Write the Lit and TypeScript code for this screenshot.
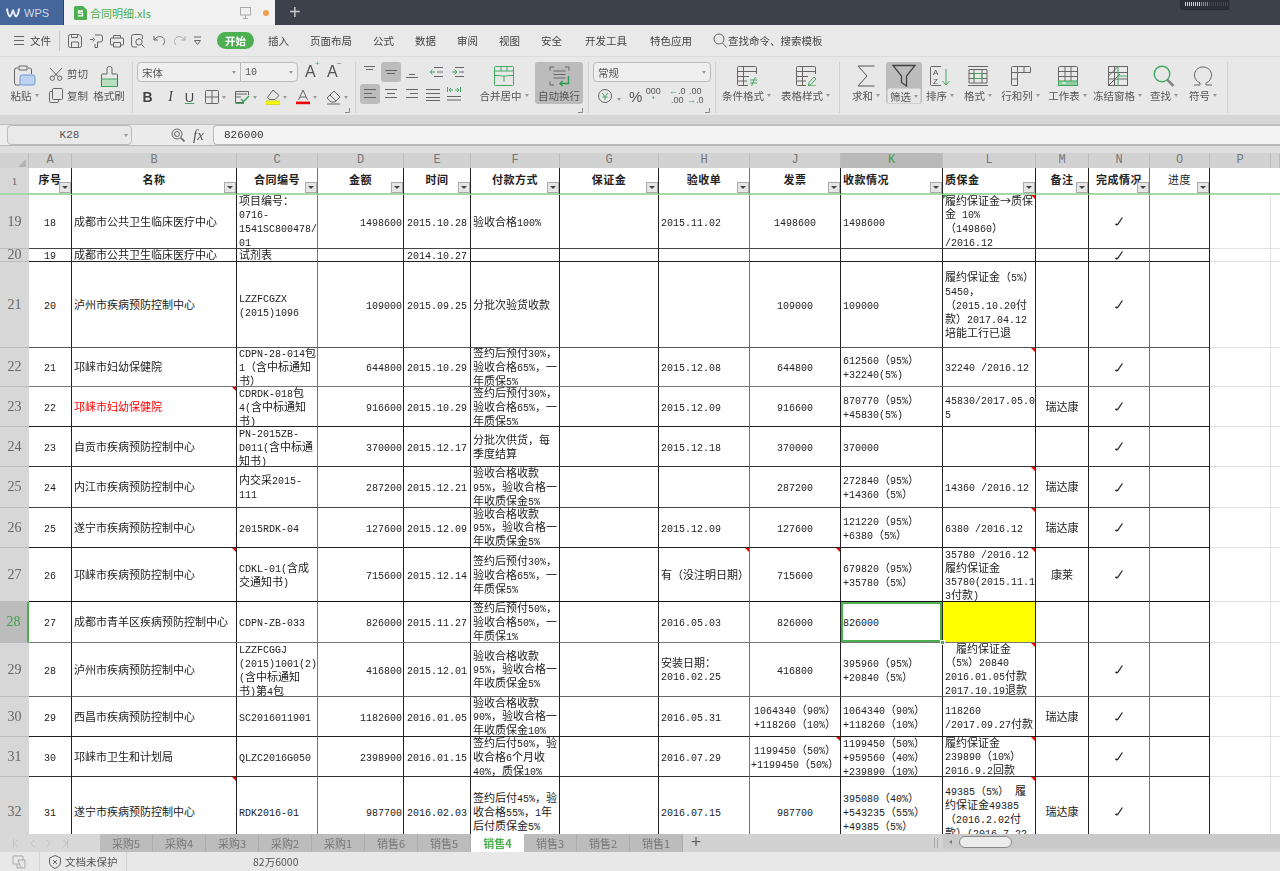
import { LitElement, html, css } from "lit";
import { customElement } from "lit/decorators.js";

const mix = (t: string) =>
  t.split(/([\x20-\x7e]+)/).map((p, i) => (i % 2 ? html`<span class="l">${p}</span>` : p));

const caret = html`<i class="caret"></i>`;
const launcher = html`<svg class="launch" width="5" height="5" viewBox="0 0 5 5"><path d="M4.5 0V4.5H0"/></svg>`;

const I = {
  logo: html`<svg width="14" height="11" viewBox="0 0 14 11" class="logo"><path d="M1 1.5C1.5 6 3 9 4 9.5C5 9.5 6.5 4 7 3.5C7.5 4 9 9.5 10 9.5C11 9 12.5 6 13 1.5"/></svg>`,
  sheet: html`<svg width="13" height="14" viewBox="0 0 13 14" class="solid"><path d="M1.5 0H9L13 4V12.5A1.5 1.5 0 0 1 11.5 14H1.5A1.5 1.5 0 0 1 0 12.5V1.5A1.5 1.5 0 0 1 1.5 0Z" fill="#4caf50" stroke="none"/><path d="M9 5H4.5V7.2H8.5V9.8H4" stroke="#fff" stroke-width="1.3"/></svg>`,
  monitor: html`<svg width="11" height="12" viewBox="0 0 11 12" class="lite"><rect x=".5" y=".5" width="10" height="7.5"/><path d="M5.5 8V11M3 11.5H8"/></svg>`,
  save: html`<svg width="14" height="14" viewBox="0 0 14 14"><path d="M2.5.5H11L13.5 3V11.5A2 2 0 0 1 11.5 13.5H2.5A2 2 0 0 1 .5 11.5V2.5A2 2 0 0 1 2.5.5ZM3.5 13V8H10.5V13M3.5 .7V3.5H9.5V.7"/></svg>`,
  saveas: html`<svg width="14" height="14" viewBox="0 0 14 14"><path d="M1 5.5H4M4 3.5L5.5 5.5L4 7.5M6 1H11.5A2 2 0 0 1 13.5 3V6A2 2 0 0 1 11.5 8H8.5V13.5H6V10"/></svg>`,
  print: html`<svg width="14" height="14" viewBox="0 0 14 14"><path d="M3.5 4V1.5H10.5V4M3 11H1.5A1 1 0 0 1 .5 10V5A1 1 0 0 1 1.5 4H12.5A1 1 0 0 1 13.5 5V10A1 1 0 0 1 12.5 11H11M3.5 8.5H10.5V13H3.5Z"/></svg>`,
  preview: html`<svg width="15" height="14" viewBox="0 0 15 14"><path d="M6 13H2.5A2 2 0 0 1 .5 11V2.5A2 2 0 0 1 2.5.5H9.5A2 2 0 0 1 11.5 2.5V5"/><circle cx="8" cy="8" r="3.2"/><path d="M10.5 10.5L13.5 13.5"/></svg>`,
  undo: html`<svg width="13" height="11" viewBox="0 0 13 11"><path d="M1 1V5H5M1.3 5C3 2 6 1 9 2C12 3.5 12.5 7 10 10"/></svg>`,
  redo: html`<svg width="13" height="11" viewBox="0 0 13 11" class="lite"><path d="M12 1V5H8M11.7 5C10 2 7 1 4 2C1 3.5 .5 7 3 10"/></svg>`,
  more: html`<svg width="9" height="10" viewBox="0 0 9 10"><path d="M1 1H8M1.5 4.5H7.5L4.5 8.5Z"/></svg>`,
  search: html`<svg width="14" height="15" viewBox="0 0 14 15"><circle cx="6" cy="6" r="5"/><path d="M9.5 10L13.5 14.5"/></svg>`,
  paste: html`<svg width="22" height="22" viewBox="0 0 22 22"><path d="M4 3H2.5A2 2 0 0 0 .5 5V18A2 2 0 0 0 2.5 20H6M14 3H15.5A2 2 0 0 1 17.5 5V9M5 1H13V5H5Z"/><rect x="6" y="10" width="15" height="10" rx="2" fill="#bcd2ee" stroke="#6d9ad6"/></svg>`,
  cut: html`<svg width="14" height="14" viewBox="0 0 14 14"><path d="M1 1L9 9.5M13 1L5 9.5"/><circle cx="3.2" cy="11.2" r="2.2"/><circle cx="10.8" cy="11.2" r="2.2"/></svg>`,
  copy: html`<svg width="14" height="15" viewBox="0 0 14 15"><path d="M3 3.5H1.5A1 1 0 0 0 .5 4.5V13.5A1 1 0 0 0 1.5 14.5H8.5A1 1 0 0 0 9.5 13.5V12M4.5.5H12.5A1 1 0 0 1 13.5 1.5V10.5A1 1 0 0 1 12.5 11.5H4.5A1 1 0 0 1 3.5 10.5V1.5A1 1 0 0 1 4.5.5Z"/></svg>`,
  brush: html`<svg width="19" height="21" viewBox="0 0 19 21"><rect x="1.5" y="13" width="16" height="7" fill="#b7dfc0" stroke="none"/><path d="M7 8V2.5A2.5 2 0 0 1 12 2.5V8H16.5A1 1 0 0 1 17.5 9V20.5H1.5V9A1 1 0 0 1 2.5 8Z"/><path d="M1.5 13H17.5M1.5 20.5H17.5" class="gs"/></svg>`,
  border: html`<svg width="14" height="14" viewBox="0 0 14 14"><path d="M1.5.5H12.5A1 1 0 0 1 13.5 1.5V12.5A1 1 0 0 1 12.5 13.5H1.5A1 1 0 0 1 .5 12.5V1.5A1 1 0 0 1 1.5.5ZM7 .5V13.5M.5 7H13.5"/></svg>`,
  cfmt: html`<svg width="15" height="14" viewBox="0 0 15 14"><path d="M13.5 5V1.5H.5V12.5H9M.5 7H6M.5 4H12"/><path d="M6 9L8.5 11.5L14 6" class="gs" stroke-width="1.6"/><path d="M.5 13.5H9" class="gs"/></svg>`,
  fill: html`<svg width="14" height="16" viewBox="0 0 14 16"><path d="M7 1L13 6.5L9 10.5H3L1.5 8.5Z"/><rect x="0" y="12" width="14" height="3.4" fill="#ff0" stroke="#d8d820"/></svg>`,
  font: html`<svg width="14" height="16" viewBox="0 0 14 16"><path d="M2.5 11L7 1L11.5 11M4 8H10"/><rect x="0" y="12.6" width="14" height="2.6" fill="#e00" stroke="none"/></svg>`,
  eraser: html`<svg width="15" height="15" viewBox="0 0 15 15"><path d="M8 1L14 7L9 12H5L1 8ZM4 5L10 11M1 14H14" /></svg>`,
  lines: (ys: number[][]) => html`<svg width="14" height="14" viewBox="0 0 14 14"><path d="${ys.map(([a, b, y]) => `M${a} ${y}H${b}`).join("")}"/></svg>`,
  indL: html`<svg width="13" height="12" viewBox="0 0 13 12"><path d="M4 1.5H13M7 6H13M4 10.5H13"/><path d="M5 6H0M2.5 3.5L0 6L2.5 8.5" class="gs"/></svg>`,
  indR: html`<svg width="13" height="12" viewBox="0 0 13 12"><path d="M4 1.5H13M8 6H13M4 10.5H13"/><path d="M1 6H6M3.5 3.5L6 6L3.5 8.5" class="gs"/></svg>`,
  dist: html`<svg width="14" height="14" viewBox="0 0 14 14"><path d="M0 9.5H14M0 13H14"/><path d="M.5 0V5M13.5 0V5M2.5 3H6M4 1L2 3L4 5M11.5 3H8M10 1L12 3L10 5" class="gs"/></svg>`,
  merge: html`<svg width="20" height="20" viewBox="0 0 20 20"><path d="M1.5.5H18.5A1 1 0 0 1 19.5 1.5V18.5A1 1 0 0 1 18.5 19.5H1.5A1 1 0 0 1 .5 18.5V1.5A1 1 0 0 1 1.5.5ZM.5 5H19.5M.5 9.5H6.5M13.5 9.5H19.5M7 .5V5M13 .5V5M6.5 10H13.5M10 10V15.5" class="gs"/></svg>`,
  wrap: html`<svg width="21" height="20" viewBox="0 0 21 20"><path d="M1 4.5V1H5M16 1H20V4.5M1 15.5V19H5M4.5 5H16.5M4.5 8.5H16.5M4.5 12H16.5"/><path d="M19.5 10V17.5H11M13.5 15L11 17.5L13.5 20" class="gd"/></svg>`,
  yen: html`<svg width="14" height="14" viewBox="0 0 14 14"><circle cx="7" cy="7" r="6.5"/><path d="M4 4L7 7.5L10 4M7 7.5V11M4.5 8H9.5" class="gs"/></svg>`,
  cond: html`<svg width="20" height="20" viewBox="0 0 20 20"><path d="M19.5 8V1.5A1 1 0 0 0 18.5 .5H1.5A1 1 0 0 0 .5 1.5V18.5A1 1 0 0 0 1.5 19.5H11M.5 5.5H19.5M.5 10.5H12M.5 15H10M6.5 .5V19.5"/><path d="M13 14H20M13 17H20M18.5 11L14.5 20" class="gs"/></svg>`,
  tstyle: html`<svg width="20" height="20" viewBox="0 0 20 20"><path d="M19.5 8V1.5A1 1 0 0 0 18.5 .5H1.5A1 1 0 0 0 .5 1.5V18.5A1 1 0 0 0 1.5 19.5H10M.5 5.5H19.5M.5 10.5H12M.5 15H10M6.5 .5V19.5"/><path d="M12.5 19.5L13 16.5L18 11L20 13L15 18.5ZM12 19.8H20" class="gs"/></svg>`,
  sum: html`<svg width="20" height="22" viewBox="0 0 20 22"><path d="M18.5 1H2L11 11L2 21H18.5" stroke="#555"/></svg>`,
  funnel: html`<svg width="24" height="24" viewBox="0 0 24 24"><path d="M1 1.5H23L14.5 12V22L9.5 18.5V12Z" stroke="#444" stroke-width="1.3"/></svg>`,
  az: html`<svg width="20" height="20" viewBox="0 0 20 20"><path d="M11 .5H1.5A1 1 0 0 0 .5 1.5V18.5A1 1 0 0 0 1.5 19.5H11"/><path d="M16 3V18.5M12.5 15L16 19L19.5 15" class="gs"/><text x="3" y="9" class="az">A</text><text x="3" y="18" class="az">Z</text></svg>`,
  format: html`<svg width="20" height="20" viewBox="0 0 20 20"><path d="M0 .5H20M0 19.5H20M1 3.5H19V17H1ZM1 7.5H19M1 12.5H19M6 3.5V17M14 3.5V17"/><rect x="6" y="7.5" width="8" height="5" class="gs"/></svg>`,
  rowcol: html`<svg width="20" height="20" viewBox="0 0 20 20"><path d="M.5 1.5A1 1 0 0 1 1.5 .5H18.5A1 1 0 0 1 19.5 1.5V6.5H6.5V19.5H1.5A1 1 0 0 1 .5 18.5ZM6.5 .5V6.5M13 .5V6.5M.5 6.5H6.5M.5 13H6.5"/></svg>`,
  ws: html`<svg width="20" height="20" viewBox="0 0 20 20"><path d="M.5 15V1.5A1 1 0 0 1 1.5 .5H18.5A1 1 0 0 1 19.5 1.5V15M.5 5.5H19.5M.5 10.5H19.5M7 .5V15M13 .5V15"/><rect x=".5" y="15" width="19" height="4.5" fill="#8ed0a0" stroke="#3fa45c"/><path d="M4 17H8" stroke="#fff"/></svg>`,
  freeze: html`<svg width="20" height="20" viewBox="0 0 20 20"><rect x=".5" y=".5" width="19" height="19"/><path d="M.5 6.5H19.5M.5 13H19.5M6.5 .5V19.5M.5 10L10 .5M.5 19.5L12 8"/><path d="M10 .5V19.5M10 10H19.5" class="gs"/></svg>`,
  find: html`<svg width="22" height="22" viewBox="0 0 22 22"><circle cx="9" cy="9" r="7.8" class="gs" stroke-width="1.4"/><path d="M14.5 15L20.5 21" stroke-width="2.6" stroke="#888"/></svg>`,
  omega: html`<svg width="20" height="20" viewBox="0 0 20 20"><path d="M1 19H7V17C3.5 15.5 1.5 12.5 1.5 9C1.5 4.5 5 1 10 1C15 1 18.5 4.5 18.5 9C18.5 12.5 16.5 15.5 13 17V19H19"/></svg>`,
  shield: html`<svg width="12" height="14" viewBox="0 0 12 14"><path d="M6 .5L11.5 3V7C11.5 10 9 12.5 6 13.5C3 12.5 .5 10 .5 7V3ZM4 5L8 9M8 5L4 9"/></svg>`,
  devices: html`<svg width="14" height="14" viewBox="0 0 14 14" class="lite"><path d="M8 9H1V1H11V5M5 9V13H9M6 5H13V13H9Z"/></svg>`,
  zoomfx: html`<svg width="14" height="14" viewBox="0 0 14 14"><circle cx="6" cy="6" r="5"/><circle cx="6" cy="6" r="2.5"/><path d="M9.5 9.5L13.5 13.5" stroke-width="1.6"/></svg>`,
};
const check = html`<svg class="check" width="8" height="9" viewBox="0 0 8 9"><path d="M2.4 7.8L7.4 .5"/><path d="M.5 6.8L2.4 8.2" stroke-width="1.6"/></svg>`;

interface Row { n: string; h: number; line: string; c: string[]; mark?: Record<number, string>; done?: boolean; }

const pay1 = "验收合格收款\n95%，验收合格一\n年收质保金5%";
const CDC = "疾病预防控制中心";
const rows: Row[] = [
  { n: "19", h: 54, line: "#444", done: true, mark: { 11: "rt gt" }, c: ["18", "成都市公共卫生临床医疗中心", "项目编号：\n0716-\n1541SC800478/\n01", "1498600", "2015.10.28", "验收合格100%", "", "2015.11.02", "1498600", "1498600", "履约保证金→质保\n金 10%\n（149860）\n/2016.12", ""] },
  { n: "20", h: 13, line: "#222", done: true, c: ["19", "成都市公共卫生临床医疗中心", "试剂表", "", "2014.10.27", "", "", "", "", "", "", ""] },
  { n: "21", h: 86, line: "#555", done: true, c: ["20", "泸州市" + CDC, "LZZFCGZX\n(2015)1096", "109000", "2015.09.25", "分批次验货收款", "", "", "109000", "109000", "履约保证金（5%）\n5450，\n（2015.10.20付\n款）2017.04.12\n培能工行已退", ""] },
  { n: "22", h: 39, line: "#777", done: true, mark: { 11: "rt" }, c: ["21", "邛崃市妇幼保健院", "CDPN-28-014包\n1（含中标通知\n书）", "644800", "2015.10.29", "签约后预付30%，\n验收合格65%，一\n年质保5%", "", "2015.12.08", "644800", "612560（95%）\n+32240(5%)", "32240 /2016.12", ""] },
  { n: "23", h: 40, line: "#222", done: true, mark: { 2: "rt" }, c: ["22", "邛崃市妇幼保健院", "CDRDK-018包\n4(含中标通知\n书)", "916600", "2015.10.29", "签约后预付30%，\n验收合格65%，一\n年质保5%", "", "2015.12.09", "916600", "870770（95%）\n+45830(5%)", "45830/2017.05.0\n5", "瑞达康"] },
  { n: "24", h: 40, line: "#333", done: true, c: ["23", "自贡市" + CDC, "PN-2015ZB-\nD011(含中标通\n知书)", "370000", "2015.12.17", "分批次供货，每\n季度结算", "", "2015.12.18", "370000", "370000", "", ""] },
  { n: "25", h: 41, line: "#444", done: true, mark: { 11: "rt" }, c: ["24", "内江市" + CDC, "内交采2015-\n111", "287200", "2015.12.21", pay1, "", "", "287200", "272840（95%）\n+14360（5%）", "14360 /2016.12", "瑞达康"] },
  { n: "26", h: 40, line: "#222", done: true, mark: { 11: "rt" }, c: ["25", "遂宁市" + CDC, "2015RDK-04", "127600", "2015.12.09", pay1, "", "2015.12.09", "127600", "121220（95%）\n+6380（5%）", "6380 /2016.12", "瑞达康"] },
  { n: "27", h: 54, line: "#111", done: true, mark: { 2: "rt", 8: "rt", 9: "rt", 11: "rt" }, c: ["26", "邛崃市" + CDC, "CDKL-01(含成\n交通知书)", "715600", "2015.12.14", "签约后预付30%，\n验收合格65%，一\n年质保5%", "", "有（没注明日期）", "715600", "679820（95%）\n+35780（5%）", "35780 /2016.12\n履约保证金\n35780(2015.11.1\n3付款)", "康莱"] },
  { n: "28", h: 41, line: "#777", c: ["27", "成都市青羊区" + CDC, "CDPN-ZB-033", "826000", "2015.11.27", "签约后预付50%，\n验收合格50%，一\n年质保1%", "", "2016.05.03", "826000", "826000", "", ""] },
  { n: "29", h: 54, line: "#666", done: true, mark: { 11: "rt" }, c: ["28", "泸州市" + CDC, "LZZFCGGJ\n(2015)1001(2)\n(含中标通知\n书)第4包", "416800", "2015.12.01", pay1, "", "安装日期：\n2016.02.25", "416800", "395960（95%）\n+20840（5%）", "　履约保证金\n（5%）20840\n2016.01.05付款\n2017.10.19退款", ""] },
  { n: "30", h: 40, line: "#222", done: true, c: ["29", "西昌市" + CDC, "SC2016011901", "1182600", "2016.01.05", "验收合格收款\n90%，验收合格一\n年收质保金10%", "", "2016.05.31", "1064340（90%）\n+118260（10%）", "1064340（90%）\n+118260（10%）", "118260\n/2017.09.27付款", "瑞达康"] },
  { n: "31", h: 40, line: "#333", done: true, mark: { 9: "rt", 11: "rt" }, c: ["30", "邛崃市卫生和计划局", "QLZC2016G050", "2398900", "2016.01.15", "签约后付50%，验\n收合格6个月收\n40%，质保10%", "", "2016.07.29", "1199450（50%）\n+1199450（50%）", "1199450（50%）\n+959560（40%）\n+239890（10%）", "履约保证金\n239890（10%）\n2016.9.2回款", ""] },
  { n: "32", h: 70, line: "#222", done: true, mark: { 2: "rt", 11: "rt" }, c: ["31", "遂宁市" + CDC, "RDK2016-01", "987700", "2016.02.03", "签约后付45%，验\n收合格55%，1年\n后付质保金5%", "", "2016.07.15", "987700", "395080（40%）\n+543235（55%）\n+49385（5%）", "49385（5%） 履\n约保证金49385\n（2016.2.02付\n款）(2016.7.22", "瑞达康"] },
];

const align = ["ctr", "", "", "right", "ctr", "", "", "", "ctr", "", "", "ctr"];
const letters = ["A", "B", "C", "D", "E", "F", "G", "H", "J", "K", "L", "M", "N", "O", "P", ""];
const heads: [string, string][] = [
  ["序号", "ctr"], ["名称", "ctr"], ["合同编号", "ctr"], ["金额", "ctr"], ["时间", "ctr"], ["付款方式", "ctr"], ["保证金", "ctr"], ["验收单", "ctr"], ["发票", "ctr"], ["收款情况", ""], ["质保金", ""], ["备注", "ctr"], ["完成情况", "ctr"], ["进度", "ctr thin"],
];
const menus = ["插入", "页面布局", "公式", "数据", "审阅", "视图", "安全", "开发工具", "特色应用"];
const sheets = ["采购5", "采购4", "采购3", "采购2", "采购1", "销售6", "销售5", "销售4", "销售3", "销售2", "销售1"];
const bigs: [string, unknown, number, string?][] = [
  ["求和", I.sum, 40],
  ["筛选", I.funnel, 36, "on"],
  ["排序", I.az, 36],
  ["格式", I.format, 40],
  ["行和列", I.rowcol, 45],
  ["工作表", I.ws, 49],
  ["冻结窗格", I.freeze, 51],
  ["查找", I.find, 42],
  ["符号", I.omega, 36],
];

@customElement("app-root")
export class AppRoot extends LitElement {
  static styles = css`
    :host { display: block; width: 1280px; height: 871px; overflow: hidden; font-family: "Noto Sans CJK SC", "Liberation Sans", sans-serif; font-size: 10.5px; color: #444; }
    .app { display: flex; flex-direction: column; height: 871px; background: #e8e8e8; filter: blur(0.4px); }
    svg { fill: none; stroke: #666; stroke-width: 1; flex: none; display: block; }
    svg .gs { stroke: #43a860; }
    svg .gd { stroke: #2f9a4e; stroke-width: 1.4; }
    svg.lite { stroke: #aaa; }
    svg.logo { stroke: #e8eef6; stroke-width: 2; }
    svg .az { font: 8px "Liberation Sans", sans-serif; fill: #555; stroke: none; }

    .title { height: 25px; background: #3d414c; display: flex; align-items: stretch; flex: none; }
    .wps { width: 63px; background: #44669b; color: #cfd9e8; display: flex; align-items: center; gap: 4px; padding-left: 6px; box-sizing: border-box; font: 11px "Liberation Sans", sans-serif; margin-right: 1px; }
    .doc { width: 211px; background: #f1f1f1; display: flex; align-items: center; padding-left: 10px; box-sizing: border-box; color: #4caf50; font-size: 11px; }
    .doc .name { margin-left: 3px; width: 150px; }
    .dot { width: 6px; height: 6px; border-radius: 50%; background: #f0a050; margin-left: 12px; }
    .plus { color: #c8c8c8; font: 20px "Liberation Sans", sans-serif; margin-left: 14px; line-height: 24px; }
    .tray { margin-left: auto; margin-right: 51px; width: 49px; height: 9px; background: #2b2e36; border-radius: 0 0 3px 3px; box-shadow: 0 1px 1px #22242a; display: flex; align-items: flex-start; padding: 2px 0 0 5px; box-sizing: border-box; gap: 1px; }
    .tray i { width: 1px; height: 4px; background: #3f8f7c; }
    .tray i.y { background: #9a9a48; }
    .tray i.d { background: #41454f; }

    .menu { height: 32px; flex: none; display: flex; align-items: center; background: #e9e9e9; border-bottom: 1px solid #dcdcdc; box-sizing: border-box; font-size: 10.5px; color: #444; }
    .burger { width: 10px; height: 9px; margin-left: 14px; border-top: 1px solid #666; border-bottom: 1px solid #666; position: relative; box-sizing: border-box; }
    .burger::after { content: ""; position: absolute; left: 0; right: 0; top: 3px; height: 1px; background: #666; }
    .file { margin: 0 8px 0 6px; }
    .sep { width: 1px; height: 20px; background: #c4c4c4; margin-right: 8px; }
    .qa { display: flex; align-items: center; width: 154px; height: 16px; gap: 7px; }
    .pill { width: 37px; height: 17px; line-height: 17px; border-radius: 9px; background: #4caf50; color: #fff; text-align: center; font-weight: 700; margin-right: 14px; margin-left: -5px; }
    .mi { margin-right: 21px; }
    .mi.w { margin-right: 23px; }
    .msearch { display: flex; align-items: center; gap: 1px; margin-left: -2px; }

    .ribbon { height: 58px; flex: none; display: flex; background: #e8e8e8; box-sizing: border-box; padding-top: 5px; }
    .g { position: relative; display: flex; box-sizing: border-box; border-right: 1px solid #d2d2d2; height: 51px; }
    .launch { position: absolute; right: 5px; bottom: 0; stroke: #888; }
    .g1 { width: 133px; }
    .g2 { width: 223px; flex-direction: column; padding-left: 4px; }
    .g3 { width: 233px; padding-left: 4px; }
    .g4 { width: 127px; flex-direction: column; padding-left: 4px; }
    .g5 { width: 124px; }
    .g6 { width: 388px; padding-left: 6px; }

    .big { display: flex; flex-direction: column; align-items: center; height: 42px; box-sizing: border-box; padding-top: 2px; color: #555; flex: none; border-radius: 3px; }
    .big .ic { height: 24px; display: flex; align-items: center; justify-content: center; }
    .big .lb { height: 15px; line-height: 15px; display: flex; align-items: center; gap: 3px; white-space: nowrap; }
    .big.on { background: #bcbcbc; position: relative; }
    .big.on .lb { background: #e6e6e6; border: 1px solid #d0d0d0; box-sizing: border-box; border-radius: 2px; width: 34px; justify-content: center; height: 16px; }
    .big.act { background: #bcbcbc; }
    .caret { width: 0; height: 0; border: 2px solid transparent; border-top: 3px solid #999; border-bottom: 0; display: inline-block; }

    .paste { width: 49px; }
    .mini { width: 41px; display: flex; flex-direction: column; gap: 7px; padding-top: 4px; box-sizing: border-box; }
    .mini div { display: flex; align-items: center; gap: 4px; height: 15px; color: #555; }
    .brush { width: 38px; }

    .row1 { display: flex; align-items: center; height: 20px; }
    .sel { height: 20px; box-sizing: border-box; border: 1px solid #bbb; border-radius: 4px; background: #efefef; display: flex; align-items: stretch; color: #555; font-size: 10.5px; }
    .sel > div { display: flex; align-items: center; padding-left: 4px; position: relative; box-sizing: border-box; }
    .sel > div + div { border-left: 1px solid #bbb; }
    .sel .caret { position: absolute; right: 4px; top: 8px; }
    .fs { width: 161px; margin-right: 7px; }
    .fs .a { width: 102px; }
    .fs .b { flex: 1; font-family: "Liberation Mono", monospace; font-size: 10px; }
    .ab { font: 16px "Liberation Sans", sans-serif; width: 22px; color: #555; position: relative; }
    .ab sup { position: absolute; font-size: 8px; left: 10px; top: -3px; color: #43a860; line-height: 8px; }
    .ab sup.m { color: #777; }
    .row2 { display: flex; align-items: center; height: 22px; margin-top: 2px; padding-top: 2px; }
    .f { display: flex; align-items: center; gap: 3px; color: #555; margin-left: 9px; }
    .f.bd { margin-left: 10px; }
    .fmt { font: 14px "Liberation Sans", sans-serif; color: #444; width: 11px; text-align: center; }
    .fmt.b { font-weight: 700; margin-left: 5px; }
    .fmt.i { font-family: "Liberation Serif", serif; font-style: italic; margin-left: 12px; }
    .fmt.u { text-decoration: underline; text-decoration-color: #43a860; font-size: 13px; margin-left: 8px; }

    .aligns { width: 107px; display: flex; flex-direction: column; gap: 2px; flex: none; }
    .al { display: flex; gap: 1px; }
    .al div { width: 20px; height: 20px; display: flex; align-items: center; justify-content: center; border-radius: 3px; }
    .al .on { background: #bcbcbc; }
    .al .gap { margin-left: 3px; }
    .merge { width: 52px; margin: 0 5px 0 11px; }
    .wrapb { width: 48px; }
    .num { width: 118px; margin-bottom: 3px; }
    .num .a { flex: 1; }
    .nf { display: flex; align-items: center; color: #555; padding-left: 5px; height: 22px; }
    .nf .yc { margin-left: 5px; }
    .nf .pct { font: 15px "Liberation Sans", sans-serif; margin-left: 8px; margin-right: 1px; color: #555; }
    .mini-n { font: 9px/9px "Liberation Sans", sans-serif; text-align: center; width: 20px; color: #555; }
    .mini-n b { font-weight: 400; color: #43a860; }
    .mini-n.n2 { margin-left: 4px; }
    .mini-n.n3 { margin-left: -2px; }
    .shade { height: 10px; flex: none; background: #d6d6d6; border-bottom: 1px solid #c0c0c0; box-sizing: border-box; }

    .fx { height: 21px; flex: none; display: flex; align-items: center; background: #ececec; border-bottom: 1px solid #b8b8b8; box-sizing: border-box; }
    .namebox { width: 125px; height: 20px; margin-left: 7px; box-sizing: border-box; border: 1px solid #bbb; border-radius: 4px; background: #e9e9e9; text-align: center; position: relative; font: 11px/18px "Liberation Mono", monospace; color: #555; }
    .namebox .caret { position: absolute; right: 3px; top: 8px; }
    .fxi { font: italic 15px "Liberation Serif", serif; color: #555; margin: 0 7px 0 8px; width: 13px; }
    .zi { margin-left: 39px; }
    .input { flex: 1; height: 20px; box-sizing: border-box; border: 1px solid #bbb; border-right: 0; border-radius: 4px 0 0 4px; background: #f3f3f3; font: 11px/18px "Liberation Mono", monospace; padding-left: 10px; color: #333; }
    .gap7 { height: 7px; flex: none; background: #dedede; }

    .sheet { flex: 1; overflow: hidden; background: #fff; min-height: 0; }
    .r { display: grid; grid-template-columns: 29px 43px 165px 81px 86px 67px 89px 99px 91px 91px 102px 93px 53px 61px 60px 61px 9px; }
    .colh { height: 15px; background: #d2d2d2; font: 12px/15px "Liberation Mono", monospace; color: #777; text-align: center; }
    .colh div { box-sizing: border-box; border-right: 1px solid #bcbcbc; border-bottom: 1px solid #bcbcbc; }
    .colh .corner { position: relative; }
    .colh .corner::after { content: ""; position: absolute; right: 2px; bottom: 2px; border: 4px solid transparent; border-right-color: #b4b4b4; border-bottom-color: #b4b4b4; }
    .colh .on { background: #b9b9b9; color: #3fa045; border-bottom: 2px solid #4caf50; }

    .c { box-sizing: border-box; border-right: 1px solid #222; border-bottom: 1px solid var(--line); display: flex; align-items: center; overflow: hidden; position: relative; padding-left: 2px; font-size: 11px; line-height: 13.5px; color: #222; white-space: pre; background: #fff; }
    .c .l { font-family: "Liberation Mono", monospace; font-size: 10px; line-height: 10px; }
    .c .red { color: #f00; }
    .c.ctr { justify-content: center; text-align: center; padding-left: 0; }
    .c.right { justify-content: flex-end; padding-right: 1px; }
    .c:nth-child(4), .c:nth-child(9), .c:nth-child(14) { border-right-color: #777; }
    .c.rh { background: #d7d7d7; border-right: 0; border-bottom-color: #bcbcbc; justify-content: center; padding: 0; font: 14px "Liberation Serif", serif; color: #666; }
    .c.rh.on { background: #bcbcbc; color: #3fa045; border-right: 2px solid #4caf50; }
    .c.blank { border-right-color: #e2e2e2; border-bottom-color: #e2e2e2; }
    .c.q { border-right: 0; }
    .c.yellow { background: #ff0; }
    .c.active { overflow: visible; box-shadow: inset 0 0 0 2px #4caf50; }
    .c.active::after { content: ""; position: absolute; right: -3px; bottom: -3px; width: 5px; height: 5px; background: #4caf50; border: 1px solid #fff; box-sizing: border-box; z-index: 2; }
    .c.rt::after { content: ""; position: absolute; right: 0; top: 0; border: 2.5px solid transparent; border-top-color: #e00; border-right-color: #e00; }
    .c.gt::before { content: ""; position: absolute; left: 0; top: 0; border: 2px solid transparent; border-top-color: #2a9a3a; border-left-color: #2a9a3a; }
    .check { stroke: #222; stroke-width: 1.2; }

    .hr { height: 27px; --line: transparent; }
    .hr .c { border-bottom: 2px solid #a6d8a8; overflow: visible; font-weight: 700; font-size: 11px; letter-spacing: 0.5px; }
    .hr .c.thin { font-weight: 400; }
    .hr .c.rh { border-bottom: 2px solid #a6d8a8; font-weight: 400; letter-spacing: 0; }
    .hr .c.blank { border-bottom: 2px solid #a6d8a8; border-right: 0; }
    .hr .t { margin-top: -2px; }
    .fb { position: absolute; right: 0; bottom: 0; width: 12px; height: 11px; background: #e6e6e6; border: 1px solid #aaa; box-sizing: border-box; display: flex; align-items: center; justify-content: center; }
    .fb::after { content: ""; border: 3px solid transparent; border-top: 3px solid #444; border-bottom: 0; }

    .tabs { height: 18px; flex: none; display: flex; background: #d2d2d2; font-size: 11px; color: #777; }
    .nav { width: 100px; background: #d8d8d8; display: flex; align-items: center; gap: 11px; padding-left: 13px; box-sizing: border-box; }
    .nav svg { stroke: #c0c0c0; }
    .tab { width: 53px; background: #bcbcbc; border-right: 1px solid #adadad; box-sizing: border-box; text-align: center; line-height: 18px; flex: none; }
    .tab.on { background: #fff; color: #4caf50; font-weight: 700; border-right: 0; }
    .addt { color: #666; font: 18px/17px "Liberation Sans", sans-serif; margin-left: 3px; width: 20px; text-align: center; font-weight: 400; }
    .hsb { margin-left: 228px; width: 2px; height: 10px; align-self: center; border-left: 1px solid #aaa; border-right: 1px solid #aaa; flex: none; }
    .track { flex: 1; margin-left: 5px; height: 15px; background: #c9c9c9; display: flex; align-items: center; padding-left: 6px; }
    .track i { width: 0; height: 0; border: 2px solid transparent; border-right: 3px solid #777; border-left: 0; }
    .thumb { width: 53px; height: 12px; box-sizing: border-box; border: 1px solid #888; border-radius: 6px; background: #ececec; margin-left: 7px; }

    .status { height: 19px; flex: none; display: flex; align-items: center; background: #e8e8e8; font-size: 10.5px; color: #555; }
    .st1 { width: 40px; height: 19px; border-right: 1px solid #d4d4d4; box-sizing: border-box; display: flex; align-items: center; padding-left: 12px; }
    .st2 { width: 87px; height: 19px; border-right: 1px solid #d4d4d4; box-sizing: border-box; display: flex; align-items: center; gap: 4px; padding-left: 9px; }
    .st3 { margin-left: 126px; }
  `;

  private big(label: string, icon: unknown, w: number, cls = "") {
    return html`<div class="big ${cls}" style="width:${w}px"><div class="ic">${icon}</div><div class="lb">${label}${caret}</div></div>`;
  }

  render() {
    const L = I.lines;
    return html`<div class="app">
      <div class="title">
        <div class="wps">${I.logo}<span>WPS</span></div>
        <div class="doc">${I.sheet}<span class="name">合同明细.xls</span>${I.monitor}<i class="dot"></i></div>
        <div class="plus">+</div>
        <div class="tray">${[..."ggggggggyyyydddddddddd"].map((k) => html`<i class="${k}"></i>`)}</div>
      </div>

      <div class="menu">
        <div class="burger"></div><span class="file">文件</span><div class="sep"></div>
        <div class="qa">${I.save}${I.saveas}${I.print}${I.preview}${I.undo}${I.redo}${I.more}</div>
        <div class="pill">开始</div>
        ${menus.map((m, i) => html`<span class="mi ${i >= 6 ? "w" : ""}">${m}</span>`)}
        <div class="msearch">${I.search}<span>查找命令、搜索模板</span></div>
      </div>

      <div class="ribbon">
        <div class="g g1">
          <div class="big paste"><div class="ic">${I.paste}</div><div class="lb">粘贴${caret}</div></div>
          <div class="mini"><div>${I.cut}<span>剪切</span></div><div>${I.copy}<span>复制</span></div></div>
          <div class="big brush"><div class="ic">${I.brush}</div><div class="lb">格式刷</div></div>
        </div>
        <div class="g g2">
          <div class="row1">
            <div class="sel fs"><div class="a">宋体${caret}</div><div class="b">10${caret}</div></div>
            <div class="ab">A<sup>+</sup></div><div class="ab">A<sup class="m">−</sup></div>
          </div>
          <div class="row2">
            <div class="fmt b">B</div>
            <div class="fmt i">I</div>
            <div class="fmt u">U</div>
            <div class="f bd">${I.border}${caret}</div>
            <div class="f">${I.cfmt}${caret}</div>
            <div class="f">${I.fill}${caret}</div>
            <div class="f">${I.font}${caret}</div>
            <div class="f">${I.eraser}${caret}</div>
          </div>
          ${launcher}
        </div>
        <div class="g g3">
          <div class="aligns">
            <div class="al">
              <div>${L([[1, 12, 1.5], [3, 10, 4.5]])}</div>
              <div class="on">${L([[1, 13, 5.5], [3, 11, 8.5]])}</div>
              <div>${L([[4, 10, 9.5], [1, 13, 12.5]])}</div>
              <div class="gap">${I.indL}</div>
              <div>${I.indR}</div>
            </div>
            <div class="al">
              <div class="on">${L([[1, 13, 2.5], [1, 9, 6.5], [1, 13, 10.5]])}</div>
              <div>${L([[1, 13, 2.5], [3, 11, 6.5], [1, 13, 10.5]])}</div>
              <div>${L([[1, 13, 2.5], [5, 13, 6.5], [1, 13, 10.5]])}</div>
              <div>${L([[0, 14, 2.5], [0, 14, 6.5], [0, 14, 10.5], [0, 14, 13.5]])}</div>
              <div>${I.dist}</div>
            </div>
          </div>
          <div class="big merge"><div class="ic">${I.merge}</div><div class="lb">合并居中${caret}</div></div>
          <div class="big wrapb act"><div class="ic">${I.wrap}</div><div class="lb">自动换行</div></div>
          ${launcher}
        </div>
        <div class="g g4">
          <div class="sel num"><div class="a">常规${caret}</div></div>
          <div class="nf">
            ${I.yen}<span class="yc">${caret}</span>
            <span class="pct">%</span>
            <div class="mini-n">000<br /><b>❜</b></div>
            <div class="mini-n n2"><b>←</b>.0<br />.00</div>
            <div class="mini-n n3">.00<br /><b>→</b>.0</div>
          </div>
          ${launcher}
        </div>
        <div class="g g5">
          ${this.big("条件格式", I.cond, 61)}
          ${this.big("表格样式", I.tstyle, 57)}
        </div>
        <div class="g g6">${bigs.map(([l, ic, w, c]) => this.big(l, ic, w, c ?? ""))}</div>
      </div>
      <div class="shade"></div>

      <div class="fx">
        <div class="namebox">K28<i class="caret"></i></div>
        <div class="zi">${I.zoomfx}</div><span class="fxi">fx</span>
        <div class="input">826000</div>
      </div>
      <div class="gap7"></div>

      <div class="sheet">
        <div class="r colh">
          <div class="corner"></div>
          ${letters.map((l) => html`<div class="${l === "K" ? "on" : ""}">${l}</div>`)}
        </div>
        <div class="r hr">
          <div class="c rh">1</div>
          ${heads.map(([t, cl]) => html`<div class="c ${cl}"><span class="t">${t}</span><i class="fb"></i></div>`)}
          <div class="c blank"></div><div class="c blank"></div>
        </div>
        ${rows.map((r) => html`<div class="r" style="height:${r.h}px;--line:${r.line}">
          <div class="c rh ${r.n === "28" ? "on" : ""}">${r.n}</div>
          ${r.c.map((t, i) => {
            const sel = r.n === "28" && i === 9 ? "active" : "";
            const yel = r.n === "28" && i === 10 ? "yellow" : "";
            const red = r.n === "23" && i === 1 ? "red" : "";
            return html`<div class="c ${align[i]} ${r.mark?.[i + 1] ?? ""} ${sel} ${yel}"><span class="${red}">${mix(t)}</span></div>`;
          })}
          <div class="c ctr">${r.done ? check : ""}</div>
          <div class="c"></div>
          <div class="c blank"></div>
          <div class="c q blank"></div>
        </div>`)}
      </div>

      <div class="tabs">
        <div class="nav">
          <svg width="6" height="9" viewBox="0 0 6 9"><path d="M5 .5L1.5 4.5L5 8.5M.5 0V9"/></svg>
          <svg width="5" height="9" viewBox="0 0 5 9"><path d="M4.5 .5L1 4.5L4.5 8.5"/></svg>
          <svg width="5" height="9" viewBox="0 0 5 9"><path d="M.5 .5L4 4.5L.5 8.5"/></svg>
          <svg width="6" height="9" viewBox="0 0 6 9"><path d="M1 .5L4.5 4.5L1 8.5M5.5 0V9"/></svg>
        </div>
        ${sheets.map((s) => html`<div class="tab ${s === "销售4" ? "on" : ""}">${s}</div>`)}
        <div class="addt">+</div>
        <div class="hsb"></div>
        <div class="track"><i></i><div class="thumb"></div></div>
      </div>

      <div class="status">
        <div class="st1">${I.devices}</div>
        <div class="st2">${I.shield}<span>文档未保护</span></div>
        <span class="st3">82万6000</span>
      </div>
    </div>`;
  }
}
